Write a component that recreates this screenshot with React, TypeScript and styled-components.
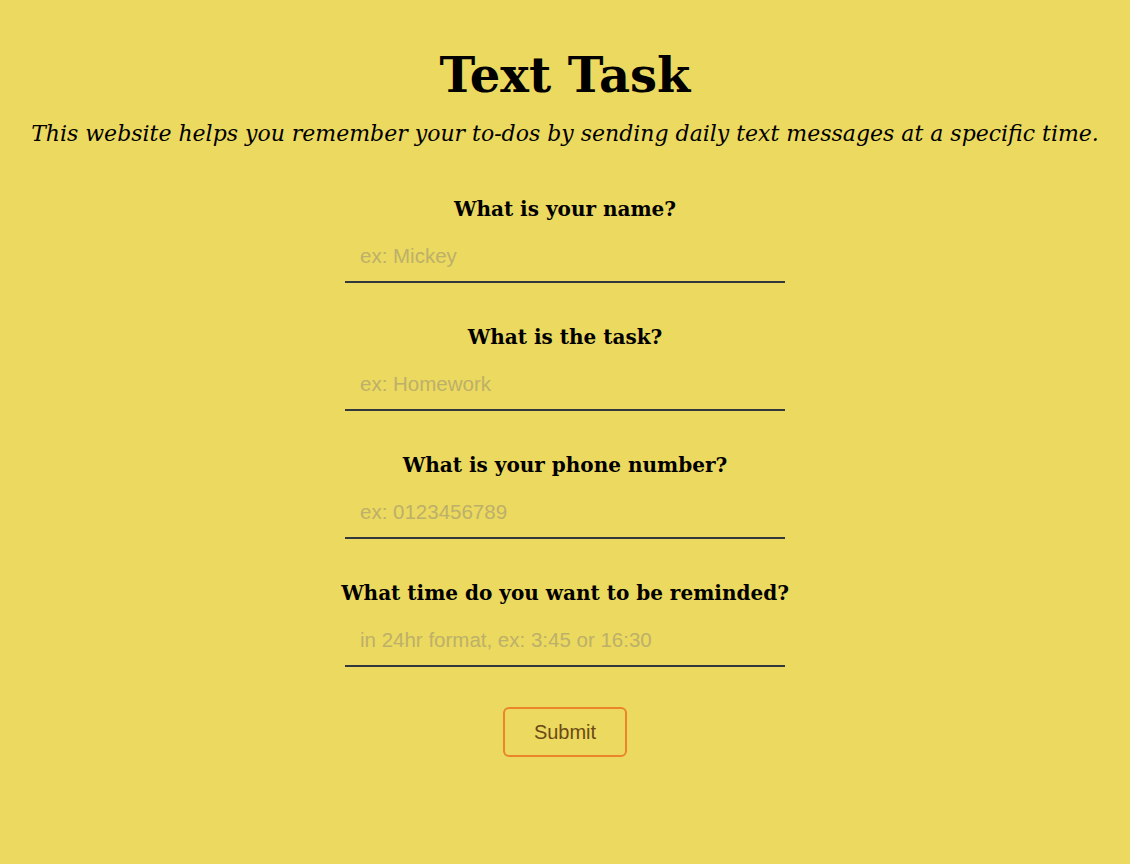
import React from "react";
import styled, { createGlobalStyle } from "styled-components";

const Global = createGlobalStyle`
  html, body { margin: 0; padding: 0; background: #ecd95f; }
  body { font-family: "DejaVu Serif", "Liberation Serif", serif; }
`;

const Page = styled.main`
  display: flex;
  flex-direction: column;
  align-items: center;
  padding-top: 42px;
  min-height: 864px;
  box-sizing: border-box;
`;

const Title = styled.h1`
  margin: 0;
  font-size: 48px;
  line-height: 66px;
  font-weight: 700;
  color: #000;
`;

const Subtitle = styled.p`
  margin: 11px 0 0;
  font-size: 22px;
  line-height: 30px;
  font-style: italic;
  color: #000;
`;

const Form = styled.form`
  display: flex;
  flex-direction: column;
  align-items: center;
  margin-top: 45px;
  gap: 39px;
`;

const Field = styled.div`
  display: flex;
  flex-direction: column;
  align-items: center;
  gap: 6px;
`;

const Label = styled.label`
  font-size: 20px;
  line-height: 30px;
  font-weight: 700;
  color: #000;
`;

const Input = styled.input`
  width: 440px;
  height: 53px;
  box-sizing: border-box;
  border: none;
  border-bottom: 2px solid #33383f;
  background: transparent;
  padding: 0 15px;
  font-family: "Liberation Sans", Arial, sans-serif;
  font-size: 20.5px;
  color: #000;
  outline: none;
  &::placeholder { color: #bdb06a; opacity: 1; }
`;

const Submit = styled.button`
  margin-top: 1px;
  width: 124px;
  height: 50px;
  border: 2px solid #ea852c;
  border-radius: 6px;
  background: transparent;
  font-family: "Liberation Sans", Arial, sans-serif;
  font-size: 20px;
  color: #6b4a14;
  cursor: pointer;
`;

const fields = [
  { id: "name", label: "What is your name?", ph: "ex: Mickey" },
  { id: "task", label: "What is the task?", ph: "ex: Homework" },
  { id: "phone", label: "What is your phone number?", ph: "ex: 0123456789" },
  { id: "time", label: "What time do you want to be reminded?", ph: "in 24hr format, ex: 3:45 or 16:30" },
];

export default function App() {
  return (
    <>
      <Global />
      <Page>
        <Title>Text Task</Title>
        <Subtitle>This website helps you remember your to-dos by sending daily text messages at a specific time.</Subtitle>
        <Form onSubmit={(e) => e.preventDefault()}>
          {fields.map((f) => (
            <Field key={f.id}>
              <Label htmlFor={f.id}>{f.label}</Label>
              <Input id={f.id} placeholder={f.ph} />
            </Field>
          ))}
          <Submit type="submit">Submit</Submit>
        </Form>
      </Page>
    </>
  );
}
